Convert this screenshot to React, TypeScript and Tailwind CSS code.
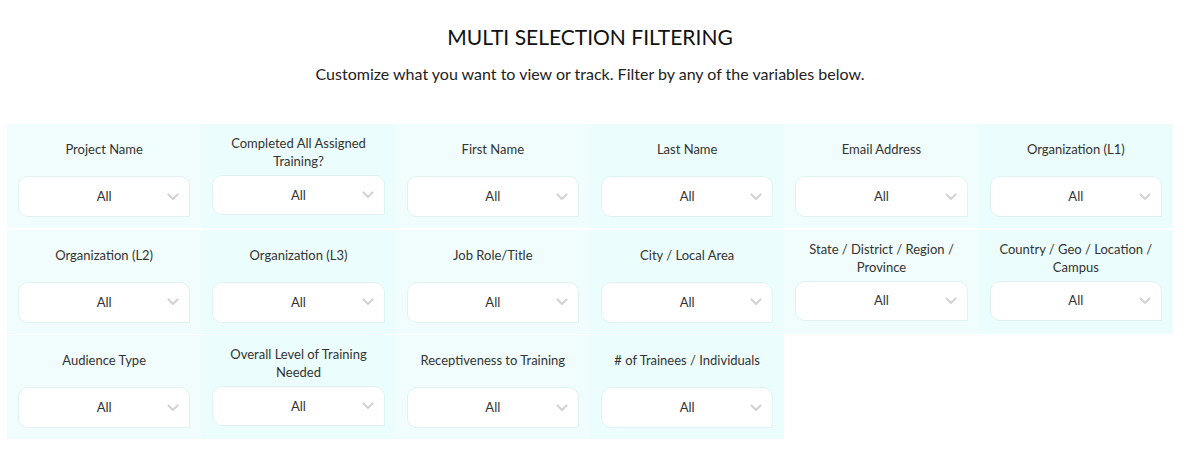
import React from "react";

type F = { label: string; two?: boolean };

const rows: F[][] = [
  [
    { label: "Project Name" },
    { label: "Completed All Assigned Training?", two: true },
    { label: "First Name" },
    { label: "Last Name" },
    { label: "Email Address" },
    { label: "Organization (L1)" },
  ],
  [
    { label: "Organization (L2)" },
    { label: "Organization (L3)" },
    { label: "Job Role/Title" },
    { label: "City / Local Area" },
    { label: "State / District / Region / Province", two: true },
    { label: "Country / Geo / Location / Campus", two: true },
  ],
  [
    { label: "Audience Type" },
    { label: "Overall Level of Training Needed", two: true },
    { label: "Receptiveness to Training" },
    { label: "# of Trainees / Individuals" },
  ],
];

function Chevron() {
  return (
    <svg width="12" height="8" viewBox="0 0 12 8" className="absolute right-[10px] top-1/2 -translate-y-1/2">
      <path d="M1.5 1.5 L6 6 L10.5 1.5" fill="none" stroke="#d4d4d4" strokeWidth="2.2" strokeLinecap="round" strokeLinejoin="round" />
    </svg>
  );
}

function Cell({ f, alt }: { f: F; alt: boolean }) {
  return (
    <div className={`h-[104px] px-[11px] flex flex-col ${alt ? "bg-[#ecfdfd]" : "bg-[#f1fdfd]"} ${f.two ? "pt-[10px]" : "pt-[16px]"}`}>
      <div className={`text-[13px] leading-[18px] text-[#333] text-center px-[8px] ${f.two ? "mb-[5px]" : "mb-[18px]"}`}>{f.label}</div>
      <div className={`relative bg-white border border-[#dff3f3] rounded-[10px] rounded-br-none flex items-center justify-center ${f.two ? "h-[40px]" : "h-[41px]"}`}>
        <span className="text-[13px] text-[#333] pt-[1px]">All</span>
        <Chevron />
      </div>
    </div>
  );
}

export default function App() {
  return (
    <div className="w-[1180px] bg-white text-[#222]" style={{ fontFamily: "Lato, 'Noto Sans', sans-serif" }}>
      <div className="pt-[24px] text-center text-[21px] leading-[26px] text-[#111]">MULTI SELECTION FILTERING</div>
      <div className="mt-[14px] text-center text-[16px] leading-[20px] text-[#222]">
        Customize what you want to view or track. Filter by any of the variables below.
      </div>
      <div className="mt-[40px] mx-[7px] grid grid-cols-6 gap-y-[1.5px]">
        {rows.map((r, ri) =>
          r.map((f, ci) => <Cell key={`${ri}-${ci}`} f={f} alt={ci % 2 === 1} />)
        )}
      </div>
    </div>
  );
}
